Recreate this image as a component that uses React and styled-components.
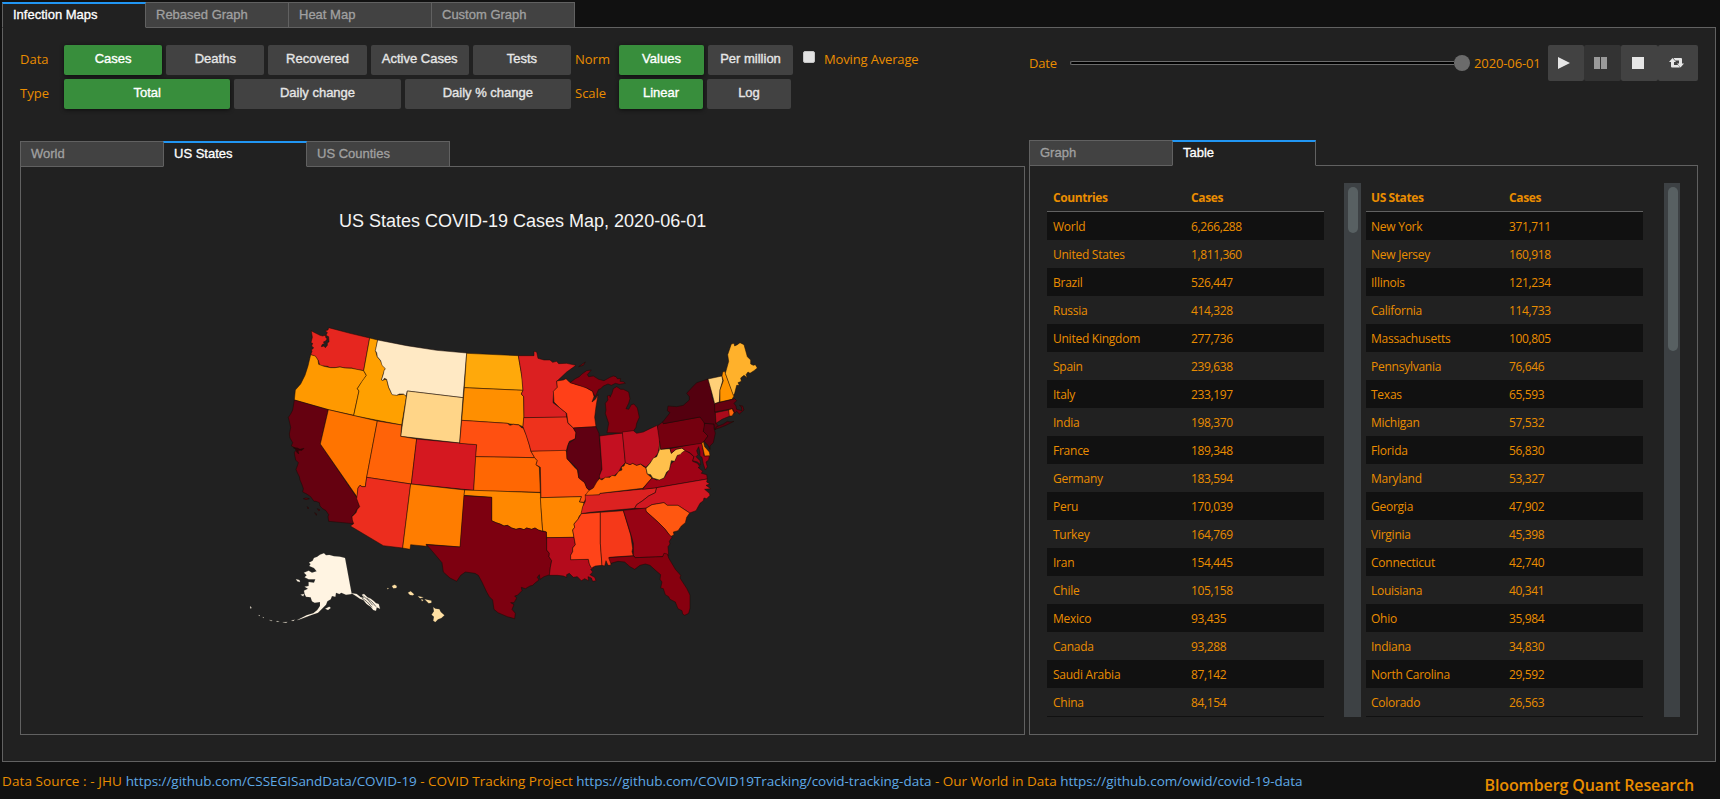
import React from 'react';
import styled, { createGlobalStyle, css } from 'styled-components';

const GlobalStyle = createGlobalStyle`
  * { box-sizing: border-box; }
  body { margin: 0; background: #111; overflow: hidden; }
`;

const ui = `"Open Sans", "Noto Sans", sans-serif`;
const arial = `"Liberation Sans", Arial, sans-serif`;
const line = '#616161';
const amber = '#ea8d00';

const Page = styled.div`
  height: 799px;
  padding: 2px 4px 0 2px;
  display: flex;
  flex-direction: column;
  background: #111;
  color: ${amber};
  font-family: ${ui};
  font-size: 13px;
`;

const TabBar = styled.div`
  display: flex;
  height: 26px;
  margin-bottom: -1px;
  position: relative;
  flex: none;
`;

const Tab = styled.div`
  width: 144px;
  height: 26px;
  padding: 0 10px;
  border: 1px solid ${line};
  background: #424242;
  color: #a0a0a0;
  font: 13px/23px ${arial};
  -webkit-text-stroke: 0.3px currentColor;
  & + & { margin-left: -1px; }
  ${(p) => p.$active && css`
    position: relative;
    border-top: 2px solid #2196f3;
    border-bottom-color: #212121;
    background: #212121;
    color: #fff;
    line-height: 21px;
  `}
`;

const MainPanel = styled.main`
  height: 735px;
  flex: none;
  padding: 17px 17px 0 17px;
  display: flex;
  gap: 4px;
  border: 1px solid ${line};
  background: #212121;
`;

const LeftColumn = styled.section`
  width: 1005px;
  display: flex;
  flex-direction: column;
`;

const RightColumn = styled.section`
  width: 669px;
  display: flex;
  flex-direction: column;
`;

const Controls = styled.div`
  height: 96px;
  display: flex;
  flex-direction: column;
  gap: 4px;
`;

const ControlRow = styled.div`
  display: flex;
  height: 30px;
`;

const Label = styled.span`
  width: ${(p) => p.$w || 44}px;
  line-height: ${(p) => p.$lh || 29}px;
  font-size: 13px;
  letter-spacing: ${(p) => p.$ls || 0}px;
  white-space: nowrap;
`;

const ButtonGroup = styled.div`
  width: ${(p) => p.$w}px;
  margin-right: ${(p) => p.$mr || 0}px;
  display: grid;
  grid-auto-flow: column;
  grid-auto-columns: 1fr;
  gap: 4px;
`;

const Button = styled.button`
  border: 0;
  border-radius: 2px;
  padding: 0 0 2px;
  background: ${(p) => (p.$on ? '#388e3c' : '#424242')};
  color: ${(p) => (p.$on ? '#fff' : '#e6e6e6')};
  box-shadow: ${(p) => (p.$on ? '0 1px 4px rgba(0,0,0,.6)' : 'none')};
  font: 13px/28px ${arial};
  -webkit-text-stroke: 0.35px currentColor;
  white-space: nowrap;
`;

const CheckBox = styled.span`
  width: 12px;
  height: 12px;
  margin: 6px 9px 0 0;
  border: 1px solid #c4c4c4;
  border-radius: 2px;
  background: #e2e2e2;
`;

const DateRow = styled.div`
  height: 95px;
  display: flex;
`;

const Slider = styled.div`
  width: 400px;
  height: 36px;
  display: flex;
  align-items: center;
`;

const Track = styled.div`
  flex: 1;
  height: 4px;
  border: 1px solid #6b6b6b;
  border-right: 0;
  border-radius: 2px 0 0 2px;
  background: #000;
`;

const Thumb = styled.div`
  width: 16px;
  height: 16px;
  border-radius: 50%;
  background: #6b6b6b;
`;

const DateValue = styled.span`
  width: 74px;
  margin-left: 4px;
  line-height: 36px;
  letter-spacing: -0.12px;
  white-space: nowrap;
`;

const PlayBar = styled.div`
  display: flex;
  height: 36px;
`;

const PlayButton = styled.button`
  width: ${(p) => p.$w || 37}px;
  padding: 0 4px 1px 0;
  border: 0;
  border-radius: 2px;
  background: ${(p) => (p.$off ? '#333' : '#424242')};
  display: flex;
  align-items: center;
  justify-content: center;
  svg { display: block; }
`;

const Panel = styled.div`
  flex: none;
  height: ${(p) => p.$h}px;
  border: 1px solid ${line};
`;

const MapPanel = styled(Panel)`
  display: flex;
  flex-direction: column;
`;

const MapTitle = styled.div`
  margin: 42px 0 0;
  padding-left: 318px;
  height: 24px;
  font: 18px/24px ${arial};
  color: #f4f4f4;
  white-space: nowrap;
`;

const MapSvg = styled.svg`
  display: block;
  margin: 77px 0 0 219px;
`;

const TablePanel = styled(Panel)`
  display: flex;
  padding: 17px 0 0 17px;
`;

const ScrollArea = styled.div`
  display: flex;
  height: 534px;
  overflow: hidden;
  margin-right: ${(p) => p.$mr || 0}px;
`;

const Table = styled.div`
  width: 277px;
  margin-right: ${(p) => p.$mr}px;
  font-size: 12px;
`;

const Row = styled.div`
  height: 28px;
  padding-left: ${(p) => p.$pad}px;
  display: grid;
  grid-template-columns: 138px 1fr;
  line-height: 30px;
  letter-spacing: -0.25px;
  white-space: nowrap;
  &:nth-child(even) { background: #111; }
  span + span { letter-spacing: -0.38px; }
`;

const HeadRow = styled(Row)`
  height: 29px;
  font-weight: 700;
  letter-spacing: -0.4px;
  border-bottom: 1px solid ${line};
`;

const ScrollBar = styled.div`
  width: ${(p) => p.$w}px;
  height: 534px;
  padding: 4px 3px 0 4px;
  background: #3d4144;
`;

const ScrollThumb = styled.div`
  width: 10px;
  height: ${(p) => p.$h}px;
  border-radius: 5px;
  background: #586062;
`;

const Footer = styled.footer`
  display: flex;
  justify-content: space-between;
  padding-right: 22px;
`;

const Sources = styled.div`
  padding-top: 9px;
  line-height: 20px;
  font-size: 13.5px;
  white-space: pre;
`;

const Source = styled.span`
  letter-spacing: ${(p) => p.$ls || 0}px;
`;

const Link = styled.a`
  color: #5fa9e6;
  letter-spacing: ${(p) => p.$ls || 0}px;
`;

const Brand = styled.div`
  padding-top: 11px;
  line-height: 24px;
  font-size: 16px;
  font-weight: 600;
  letter-spacing: -0.12px;
`;

const countries = [
  ['World', '6,266,288'], ['United States', '1,811,360'], ['Brazil', '526,447'],
  ['Russia', '414,328'], ['United Kingdom', '277,736'], ['Spain', '239,638'],
  ['Italy', '233,197'], ['India', '198,370'], ['France', '189,348'],
  ['Germany', '183,594'], ['Peru', '170,039'], ['Turkey', '164,769'],
  ['Iran', '154,445'], ['Chile', '105,158'], ['Mexico', '93,435'],
  ['Canada', '93,288'], ['Saudi Arabia', '87,142'], ['China', '84,154'], ['', ''],
];

const states = [
  ['New York', '371,711'], ['New Jersey', '160,918'], ['Illinois', '121,234'],
  ['California', '114,733'], ['Massachusetts', '100,805'], ['Pennsylvania', '76,646'],
  ['Texas', '65,593'], ['Michigan', '57,532'], ['Florida', '56,830'],
  ['Maryland', '53,327'], ['Georgia', '47,902'], ['Virginia', '45,398'],
  ['Connecticut', '42,740'], ['Louisiana', '40,341'], ['Ohio', '35,984'],
  ['Indiana', '34,830'], ['North Carolina', '29,592'], ['Colorado', '26,563'], ['', ''],
];

// State outlines, grouped by region; each region has its own origin.
const regions = [
  { x: 0, y: 0, shapes: [
    ['#e6261f', '214,62 220,66 228,70 240,76 248,78 256,76 258,84 262,86 256,94 250,96 254,100 246,104 244,110 252,108 256,113 262,106 262,98 267,96 266,80 258,76 262,68 256,62 264,60 266,53 330,70 389,84 371,182 350,179 335,174 315,174 300,171 285,173 270,173 262,169 252,168 240,168 235,152 226,140 212,134 216,124 214,120 221,114 215,108 218,100 213,98 217,82'],
    ['#ff9900', '212,134 226,138 234,150 236,163 252,169 272,173 285,173 300,171 315,174 335,175 371,182 379,196 372,208 360,224 352,236 357,243 341,316 265,299 163,270 166,240 182,222 195,196 204,168'],
    ['#ffa000', '389,84 413,90 407,124 412,140 426,158 436,176 430,192 425,210 440,208 446,232 456,252 472,255 496,252 499,262 485,345 341,317 357,243 352,236 366,214 379,196 371,182'],
    ['#ffe9c4', '413,90 500,107 590,121 680,129 669,263 502,243 498,258 490,252 478,252 470,256 456,254 450,240 446,232 443,220 440,208 433,205 428,213 425,208 430,192 432,182 436,176 426,166 422,152 412,140 410,128 406,122'],
    ['#ffd588', '502,243 669,263 659,399 482,379'],
    ['#650110', '163,270 265,299 241,402 350,562 359,590 348,602 345,610 336,618 338,628 341,641 266,634 264,620 266,614 258,602 248,596 240,588 238,578 228,574 222,574 212,560 200,552 188,546 190,536 186,524 180,510 178,500 172,488 168,478 172,468 175,458 167,450 165,440 163,428 168,420 166,414 154,408 158,398 150,384 148,372 152,352 145,322 152,312 158,300'],
    ['#ff7400', '265,299 412,333 380,502 376,530 366,530 360,526 354,534 352,562 241,402'],
    ['#ff6308', '412,333 485,345 482,379 530,387 514,522 380,502'],
    ['#d51820', '530,387 710,404 701,541 514,522'],
    ['#ec2d1e', '380,502 512,522 488,714 430,707 331,648 341,641 337,630 336,620 348,608 352,598 359,590 350,566 354,534 360,526 366,530 376,530'],
    ['#ff7d00', '512,522 674,540 661,711 558,703 560,709 512,704 510,718 488,714'],
    ['#650110', '190,566 198,564 208,566 198,569'],
    ['#650110', '202,590 206,594 204,597'],
    ['#650110', '232,596 240,600 236,602'],
    ['#650110', '224,608 230,612 229,616'],
    ['#340008', '160,413 172,414 180,418 192,415 186,421 174,421 176,432 170,426 168,418'],
  ] },
  { x: 630, y: 60, shapes: [
    ['#ffa90b', '50,70 205,77 209,100 214,130 218,150 219,181 43,173'],
    ['#ff8f00', '43,173 219,181 214,192 221,200 222,262 219,290 205,284 180,282 172,280 35,271'],
    ['#ff5011', '35,271 172,280 180,286 190,283 206,285 216,294 220,294 230,318 238,345 243,364 254,383 77,380 80,344 29,340'],
    ['#ff6703', '77,380 254,383 262,392 258,404 268,412 271,487 71,482'],
    ['#db2021', '205,77 252,77 252,64 260,66 264,85 282,90 300,90 308,97 320,94 326,101 350,100 378,106 350,126 330,145 320,154 322,172 311,184 309,218 330,234 348,248 350,262 222,263 221,200 214,192 219,181 214,130'],
    ['#ee321c', '221,263 350,261 354,280 370,294 378,308 376,326 358,334 352,350 349,362 243,364 238,345 228,314 219,290'],
    ['#ff5410', '243,364 346,361 350,366 351,386 372,410 382,420 386,442 404,458 412,476 418,480 412,498 402,517 388,516 394,500 273,503 271,412 258,404 262,392 254,383'],
    ['#ff4018', '320,153 340,150 348,146 358,156 380,164 400,168 410,174 428,184 432,200 426,216 436,208 444,194 438,230 434,262 438,290 370,294 354,278 350,250 330,234 312,216 310,184 322,172'],
    ['#600012', '370,294 438,290 447,310 456,415 450,434 446,450 438,470 430,476 418,480 410,474 404,458 386,444 384,420 370,404 351,386 350,366 356,340 376,326 378,308'],
    ['#c41021', '449,318 518,309 526,398 514,410 506,426 494,436 480,440 466,444 450,448 448,438 456,418'],
    ['#80000f', '360,158 376,146 388,140 396,132 410,122 424,120 412,134 416,140 430,138 446,148 462,152 480,142 490,138 498,140 502,146 512,146 510,154 522,156 526,160 508,163 496,160 484,166 474,162 460,168 452,176 446,178 436,200 430,190 428,184 410,174 380,164'],
    ['#80000f', '386,110 406,96 400,106'],
    ['#80000f', '471,308 476,280 466,250 468,240 466,220 474,210 472,198 480,196 480,202 486,190 490,176 500,170 512,178 520,178 536,186 540,206 536,220 528,236 536,238 544,224 552,222 562,234 568,262 560,280 558,292 550,304 518,309'],
  ] },
  { x: 540, y: 510, shapes: [
    ['#ff8800', '134,30 361,38 364,95 368,154 355,150 345,144 335,148 320,144 312,149 300,145 288,148 275,144 262,136 252,138 240,132 228,128 215,122 215,52 132,46'],
    ['#ff8600', '361,53 484,50 478,66 492,68 486,100 478,108 474,118 462,132 464,142 458,150 462,172 380,173 379,156 368,152'],
    ['#7d0010', '132,47 215,52 215,122 228,128 240,132 252,138 262,136 275,144 288,148 300,145 312,149 320,144 335,148 345,144 355,150 366,154 379,156 380,210 388,220 387,230 395,242 391,262 389,284 372,290 360,298 358,284 352,292 357,300 346,308 338,316 330,318 316,326 304,322 306,332 292,346 284,348 290,354 282,368 272,368 282,374 276,388 286,400 284,416 262,410 234,398 222,388 218,360 208,350 200,336 186,306 175,286 165,280 136,276 122,286 110,304 90,294 70,276 66,248 44,222 20,194 120,201'],
    ['#b40b1c', '380,173 462,172 464,184 466,194 458,204 458,215 452,226 452,239 505,238 508,250 512,260 520,256 520,264 512,268 518,276 510,284 524,292 528,302 518,304 514,294 504,290 506,302 494,296 484,302 472,290 460,292 448,280 440,284 440,292 430,288 412,286 388,286 391,262 395,242 387,230 388,220 380,210'],
    ['#ff4419', '484,101 541,97 541,190 546,256 526,258 514,264 508,252 505,238 452,239 452,226 458,215 458,204 466,194 462,172 458,150 464,142 462,132 474,118'],
    ['#f53919', '541,97 610,92 632,165 638,205 636,215 640,227 568,232 574,244 572,256 564,256 558,242 554,258 546,256 541,190'],
  ] },
  { x: 1050, y: 60, shapes: [
    ['#dc2221', '-14,494 28,494 30,490 200,473 196,488 176,498 158,512 140,524 134,535 0,547 -27,551 -22,530 -14,514'],
    ['#ff6009', '-14,496 -4,482 10,474 20,456 28,446 36,450 46,442 60,442 66,436 76,438 86,424 96,420 94,410 102,408 106,398 120,404 128,400 140,406 152,402 158,408 168,414 172,432 186,444 170,462 158,475 30,490 28,494'],
    ['#bd0f20', '97,306 130,302 140,310 160,306 180,296 202,286 212,330 204,370 190,388 168,412 158,406 152,402 140,406 128,400 120,404 106,398'],
    ['#9f0316', '158,478 172,460 186,444 200,450 222,444 236,420 244,400 254,392 262,374 284,360 300,370 312,380 308,394 322,400 330,410 324,412 338,424 334,430 350,434 352,447 200,473'],
    ['#d11721', '200,473 352,447 350,456 360,462 348,466 362,476 344,478 358,490 360,496 350,506 342,504 340,512 330,520 318,542 299,549 264,526 232,526 222,518 186,524 166,536 134,535 140,524 158,512 176,498 196,488'],
    ['#ff5710', '166,536 186,524 222,518 232,526 264,526 299,549 290,562 286,578 274,588 264,602 250,606 252,614 242,620 236,612 224,596 206,578 186,560 168,544'],
    ['#970314', '100,541 168,534 168,544 186,560 206,578 224,596 236,612 246,622 238,634 240,642 234,650 236,676 222,674 218,680 136,683 130,676 130,640 124,618'],
    ['#87000f', '56,683 130,678 136,683 218,680 222,670 232,672 236,684 256,718 272,736 270,744 290,775 300,795 300,835 296,850 284,856 278,852 276,842 264,836 256,816 240,808 236,800 226,794 220,776 212,774 216,756 210,748 212,734 200,724 180,706 166,702 150,706 134,718 120,710 104,696 84,694 62,700'],
    ['#ffc04c', '209,332 212,358 240,356 244,370 258,358 276,354 286,362 278,366 270,374 262,376 254,394 244,392 238,420 230,426 222,444 208,450 188,444 182,434 172,432 168,414 180,400 190,384 200,380 208,360'],
    ['#9a0216', '240,356 336,337 342,378 358,377 356,390 348,396 352,410 346,420 340,402 336,382 330,378 330,366 326,350 320,362 324,374 318,380 330,392 332,404 322,396 308,392 312,380 300,368 286,362 276,354 258,358 244,370'],
    ['#ff7d00', '335,338 340,334 344,350 358,366 360,377 344,378'],
    ['#75000f', '202,288 218,276 220,281 330,261 342,274 344,290 340,304 354,318 344,332 334,340 212,358'],
    ['#5b0011', '344,280 372,282 372,294 376,310 370,338 360,348 360,358 354,346 342,334 354,318 340,304'],
    ['#54000f', '218,276 240,248 232,242 234,228 260,230 280,226 298,210 298,200 290,190 308,170 320,158 354,147 364,180 366,200 374,222 376,250 378,280 384,286 376,300 372,282 344,280 330,261 220,281'],
    ['#54000f', '374,298 380,290 400,282 412,274 420,276 432,274 408,286 388,294'],
    ['#ffd078', '354,147 396,138 398,152 390,180 388,216 374,221 366,190'],
    ['#ff9400', '396,138 398,126 404,124 432,198 426,208 390,216 390,180 400,152'],
    ['#ffb12b', '406,130 416,94 413,74 424,42 432,40 434,48 442,44 450,38 462,44 472,80 482,90 482,102 490,106 496,104 502,114 492,122 480,130 474,126 468,134 472,144 462,136 452,144 454,154 444,158 448,166 440,166 434,190 430,196'],
    ['#650110', '374,221 428,208 434,206 440,212 432,220 438,228 440,238 456,242 454,230 448,226 458,228 462,240 448,252 440,244 434,250 428,236 374,246'],
    ['#aa0a1b', '376,248 416,240 420,258 396,268 378,280'],
    ['#ff6608', '416,240 426,236 432,248 426,258 418,258'],
  ] },
  { x: 0, y: 660, bare: true, shapes: [
    ['#fff4e2', '207,98 218,92 222,84 232,80 240,74 252,70 258,76 268,75 282,79 300,80 315,84 335,192 318,194 304,188 298,192 288,188 286,200 276,198 272,208 262,214 258,224 246,236 234,248 216,254 196,262 180,268 172,270 184,264 200,256 220,250 232,240 240,228 240,216 224,218 216,214 212,202 198,200 194,192 192,182 204,176 194,170 206,168 206,156 222,158 226,148 206,148 194,142 200,136 192,128 206,122 216,128 230,124 222,114 208,108 212,102'],
    ['#fff4e2', '335,190 350,192 362,202 372,204 366,194 372,192 382,202 392,206 402,214 408,220 416,222 420,236 410,232 408,242 400,240 392,230 380,222 370,210 360,206 348,198'],
    ['#fff4e2', '256,236 268,230 272,234 264,240'],
    ['#fff4e2', '168,148 178,150 180,156 172,154'],
    ['#fff4e2', '182,194 192,192 190,199'],
    ['#fff4e2', '31,229 34,232 33,236 31,234'],
    ['#fff4e2', '56,255 60,257 57,258'], ['#fff4e2', '68,261 72,263 70,264'],
    ['#fff4e2', '88,270 97,272 94,273'], ['#fff4e2', '110,273 118,275 110,275'],
    ['#fff4e2', '128,277 142,276 138,278'], ['#fff4e2', '154,272 164,269 160,273'],
    ['#ffe0a4', '456,168 464,164 470,168 469,174 460,175'], ['#ffe0a4', '442,174 446,175 443,178'],
    ['#ffe0a4', '504,188 512,184 522,193 519,196 510,195'],
    ['#ffe0a4', '534,199 550,202 540,205'], ['#ffe0a4', '544,208 550,210 546,214'],
    ['#ffe0a4', '554,208 574,212 574,218 566,220'],
    ['#ffe0a4', '580,232 586,236 598,238 602,246 613,256 604,264 594,268 586,276 580,272 582,260 575,254 582,244'],
  ] },
];

// Dark inlets cut into the southeastern Alaskan panhandle.
const channels = ['370,198 386,212 398,226', '380,204 396,216 408,230', '366,204 382,216 396,232'];

function StatesMap() {
  return (
    <MapSvg width="540" height="330" viewBox="0 0 540 330">
      {regions.map((r, i) => (
        <g key={i} transform={`translate(${r.x / 3} ${r.y / 3}) scale(.333333)`}>
          {r.shapes.map(([fill, points], k) => (
            <polygon key={k} points={points} fill={fill} stroke={r.bare ? fill : '#1b0b05'}
              strokeWidth={r.bare ? 1 : 2} strokeOpacity={r.bare ? 0.4 : 0.75} strokeLinejoin="round" />
          ))}
        </g>
      ))}
      <g transform="translate(0 220) scale(.333333)" fill="none" stroke="#212121" strokeWidth="2">
        {channels.map((p) => <polyline key={p} points={p} />)}
      </g>
    </MapSvg>
  );
}

function DataTable({ head, rows, gap, pad }) {
  return (
    <Table $mr={gap}>
      <HeadRow $pad={pad}><span>{head}</span><span>Cases</span></HeadRow>
      {rows.map(([name, n], i) => <Row key={i} $pad={pad}><span>{name}</span><span>{n}</span></Row>)}
    </Table>
  );
}

export default function App() {
  return (
    <Page>
      <GlobalStyle />
      <TabBar>
        <Tab $active>Infection Maps</Tab><Tab>Rebased Graph</Tab><Tab>Heat Map</Tab><Tab>Custom Graph</Tab>
      </TabBar>
      <MainPanel>
        <LeftColumn>
          <Controls>
            <ControlRow>
              <Label>Data</Label>
              <ButtonGroup $w={507} $mr={4}>
                <Button $on>Cases</Button><Button>Deaths</Button><Button>Recovered</Button>
                <Button>Active Cases</Button><Button>Tests</Button>
              </ButtonGroup>
              <Label>Norm</Label>
              <ButtonGroup $w={174} $mr={10}>
                <Button $on>Values</Button><Button>Per million</Button>
              </ButtonGroup>
              <CheckBox />
              <Label $w={120} $ls={-0.15}>Moving Average</Label>
            </ControlRow>
            <ControlRow>
              <Label>Type</Label>
              <ButtonGroup $w={507} $mr={4}>
                <Button $on>Total</Button><Button>Daily change</Button><Button>Daily % change</Button>
              </ButtonGroup>
              <Label>Scale</Label>
              <ButtonGroup $w={172}>
                <Button $on>Linear</Button><Button>Log</Button>
              </ButtonGroup>
            </ControlRow>
          </Controls>
          <TabBar>
            <Tab>World</Tab><Tab $active>US States</Tab><Tab>US Counties</Tab>
          </TabBar>
          <MapPanel $h={569}>
            <MapTitle>US States COVID-19 Cases Map, 2020-06-01</MapTitle>
            <StatesMap />
          </MapPanel>
        </LeftColumn>
        <RightColumn>
          <DateRow>
            <Label $w={41} $lh={36} $ls={-0.15}>Date</Label>
            <Slider><Track /><Thumb /></Slider>
            <DateValue>2020-06-01</DateValue>
            <PlayBar>
              <PlayButton $w={36}>
                <svg width="12" height="12" viewBox="0 0 12 12"><path d="M0 0L12 6L0 12Z" fill="#e6e6e6" /></svg>
              </PlayButton>
              <PlayButton $off>
                <svg width="13" height="12" viewBox="0 0 13 12"><path d="M0 0H6V12H0ZM7 0H13V12H7Z" fill="#9a9a9a" /></svg>
              </PlayButton>
              <PlayButton>
                <svg width="12" height="12" viewBox="0 0 12 12"><path d="M0 0H12V12H0Z" fill="#e6e6e6" /></svg>
              </PlayButton>
              <PlayButton $w={40}>
                <svg width="15" height="10" viewBox="0 0 15 10">
                  <path d="M3.5 0L7 4H5V7H9L11 9.5H3Q2 9.5 2 8.5V4H0ZM4.5 0H12Q13 0 13 1V5.5H15L11.5 9.5L8 5.5H10V2.5H6.2Z" fill="#e6e6e6" />
                </svg>
              </PlayButton>
            </PlayBar>
          </DateRow>
          <TabBar>
            <Tab>Graph</Tab><Tab $active>Table</Tab>
          </TabBar>
          <TablePanel $h={570}>
            <ScrollArea $mr={5}>
              <DataTable head="Countries" rows={countries} gap={20} pad={6} />
              <ScrollBar $w={17}><ScrollThumb $h={46} /></ScrollBar>
            </ScrollArea>
            <ScrollArea>
              <DataTable head="US States" rows={states} gap={21} pad={5} />
              <ScrollBar $w={16}><ScrollThumb $h={164} /></ScrollBar>
            </ScrollArea>
          </TablePanel>
        </RightColumn>
      </MainPanel>
      <Footer>
        <Sources>
          <Source $ls={0.09}>{'Data Source : - JHU '}</Source>
          <Link $ls={-0.04}>https://github.com/CSSEGISandData/COVID-19</Link>
          <Source>{' - COVID Tracking Project '}</Source>
          <Link $ls={-0.02}>https://github.com/COVID19Tracking/covid-tracking-data</Link>
          <Source>{' - Our World in Data '}</Source>
          <Link>https://github.com/owid/covid-19-data</Link>
        </Sources>
        <Brand>Bloomberg Quant Research</Brand>
      </Footer>
    </Page>
  );
}
